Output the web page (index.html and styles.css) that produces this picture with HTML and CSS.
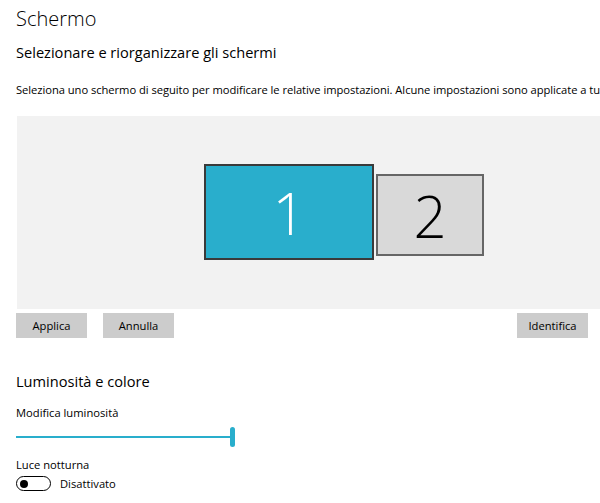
FILE: index.html
```html
<!DOCTYPE html>
<html lang="it">
<head>
  <meta charset="UTF-8" />
  <meta name="viewport" content="width=device-width, initial-scale=1.0"/>
  <title>Schermo</title>
  <link rel="stylesheet" href="styles.css">
</head>
<body>
  <div class="page">
    <h1>Schermo</h1>
    <h2>Selezionare e riorganizzare gli schermi</h2>
    <p class="desc">Seleziona uno schermo di seguito per modificare le relative impostazioni. Alcune impostazioni sono applicate a tu</p>

    <div class="arrange">
      <div class="monitor primary">1</div>
      <div class="monitor secondary">2</div>
    </div>

    <div class="actions">
      <button class="btn">Applica</button>
      <button class="btn">Annulla</button>
      <button class="btn right">Identifica</button>
    </div>

    <h3>Luminosità e colore</h3>
    <div class="label">Modifica luminosità</div>
    <div class="slider">
      <div class="track"></div>
      <div class="thumb"></div>
    </div>

    <div class="label night">Luce notturna</div>
    <div class="toggle-row">
      <span class="toggle"><span class="knob"></span></span>
      <span>Disattivato</span>
    </div>
  </div>
</body>
</html>
```

FILE: styles.css
```css
body {
  margin: 0;
  font-family: "Open Sans", "Noto Sans", sans-serif;
  color: #000;
  background: #fff;
  overflow: hidden;
}

.page {
  padding: 0 0 0 16px;
  width: 584px;
}

h1 {
  margin: 0;
  padding-top: 6px;
  font-size: 20px;
  font-weight: 300;
  line-height: 26px;
}

h2 {
  margin: 10px 0 0;
  font-size: 14.6px;
  font-weight: 400;
  line-height: 20px;
}

.desc {
  margin: 20px 0 0;
  font-size: 11.2px;
  line-height: 16px;
  white-space: nowrap;
  letter-spacing: -0.05px;
}

.arrange {
  margin: 18px 0 0 1px;
  height: 193px;
  background: #f2f2f2;
  display: flex;
  align-items: flex-start;
  gap: 2px;
  padding-left: 187px;
  padding-top: 48px;
  box-sizing: border-box;
}

.monitor {
  box-sizing: border-box;
  display: flex;
  align-items: center;
  justify-content: center;
  font-weight: 300;
  font-size: 58px;
}

.primary {
  width: 170px;
  height: 96px;
  background: #29aecc;
  color: #fff;
  border: 2px solid #3a3a3a;
}

.secondary {
  width: 108px;
  height: 82px;
  margin-top: 10px;
  background: #d9d9d9;
  color: #000;
  border: 2px solid #666;
}

.actions {
  display: flex;
  gap: 16px;
  margin-top: 4px;
  width: 572px;
}

.btn {
  width: 71px;
  height: 25px;
  border: none;
  background: #cccccc;
  font-family: inherit;
  font-size: 11.2px;
  color: #000;
  padding: 0;
}

.right {
  margin-left: auto;
}

h3 {
  margin: 33px 0 0;
  font-size: 14.6px;
  font-weight: 400;
  line-height: 20px;
}

.label {
  margin-top: 14px;
  font-size: 11.2px;
  line-height: 16px;
}

.slider {
  position: relative;
  width: 219px;
  height: 20px;
  margin-top: 6px;
}

.track {
  position: absolute;
  left: 0;
  right: 5px;
  top: 9px;
  height: 2px;
  background: #29aecc;
}

.thumb {
  position: absolute;
  right: 0;
  top: 0;
  width: 5px;
  height: 20px;
  border-radius: 3px;
  background: #29aecc;
}

.night {
  margin-top: 10px;
}

.toggle-row {
  display: flex;
  align-items: center;
  gap: 9px;
  margin-top: 3px;
  font-size: 11.2px;
}

.toggle {
  box-sizing: border-box;
  width: 35px;
  height: 15px;
  border: 1.5px solid #000;
  border-radius: 8px;
  display: flex;
  align-items: center;
  padding-left: 3px;
}

.knob {
  width: 8px;
  height: 8px;
  border-radius: 50%;
  background: #000;
}
```
